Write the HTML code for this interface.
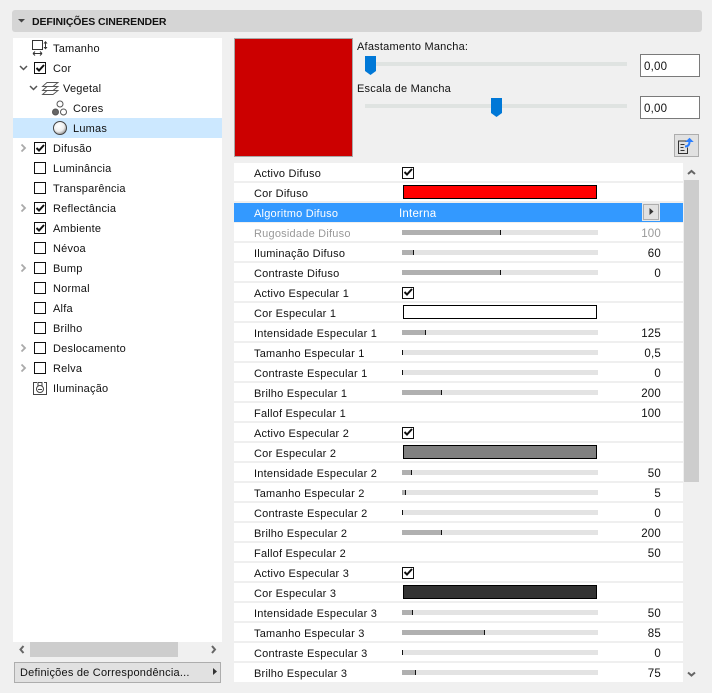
<!DOCTYPE html>
<html><head><meta charset="utf-8">
<style>
html,body{margin:0;padding:0;background:#f0f0f0}
body{width:712px;height:693px;position:relative;overflow:hidden;font-family:"Liberation Sans",sans-serif;font-size:11px;color:#111}
.a{position:absolute}
.t{position:absolute;white-space:nowrap;line-height:14px;letter-spacing:.22px;margin-top:1px}
.cb{position:absolute;width:10px;height:10px;border:1px solid #111;background:#fff}
svg{position:absolute;overflow:visible}
.r{position:absolute;left:234px;width:449px;height:18px;background:#fff;border-bottom:2px solid #efefef}
.r .l{position:absolute;left:20px;top:4px;white-space:nowrap;line-height:14px;letter-spacing:.22px}
.r .v{position:absolute;right:22px;top:4px;line-height:14px;letter-spacing:.2px;font-size:11.5px}
.r .s{position:absolute;left:168px;top:7px;width:196px;height:5px;background:#e3e3e3}
.r .s i{position:absolute;left:0;top:0;height:5px;background:#b0b0b0;border-right:1px solid #111}
.r .c{position:absolute;left:169px;top:2px;width:192px;height:12px;border:1px solid #000}
.r .b{position:absolute;left:168px;top:4px;width:10px;height:10px;border:1px solid #111;background:#fff}
.g{color:#999}
</style></head><body>

<!-- header -->
<div class="a" style="left:12px;top:10px;width:690px;height:22px;background:#d5d5d5;border-radius:3px"></div>
<svg style="left:0;top:0" width="30" height="30"><path d="M18 19h7l-3.500 3.500z" fill="#444"/></svg>
<div class="t" style="left:32px;top:14px;font-weight:bold;font-size:10.500px;letter-spacing:-.1px">DEFINIÇÕES CINERENDER</div>

<!-- tree panel -->
<div class="a" style="left:13px;top:38px;width:209px;height:604px;background:#fff"></div>
<div class="a" style="left:13px;top:118px;width:209px;height:20px;background:#cce8ff"></div>

<svg style="left:0;top:0" width="230" height="400" fill="none" stroke="#333">
<!-- tamanho icon -->
<rect x="32.500" y="40.500" width="10" height="9"/>
<path d="M43.500 43.500l2-2.500 2 2.500zM43.500 47l2 2.500 2-2.500z" fill="#333" stroke="none"/>
<path d="M45.500 42v6"/>
<path d="M33 53.500h9M33 53.500l2-2M33 53.500l2 2M42 53.500l-2-2M42 53.500l-2 2"/>
<!-- expanders -->
<path d="M20 66l3.500 3.500L27 66" stroke="#555" stroke-width="1.500"/>
<path d="M30 86l3.500 3.500L37 86" stroke="#555" stroke-width="1.500"/>
<g stroke="#aaa" stroke-width="1.800">
<path d="M21.500 144.500l3.500 3.500-3.500 3.500"/>
<path d="M21.500 204.500l3.500 3.500-3.500 3.500"/>
<path d="M21.500 264.500l3.500 3.500-3.500 3.500"/>
<path d="M21.500 344.500l3.500 3.500-3.500 3.500"/>
<path d="M21.500 364.500l3.500 3.500-3.500 3.500"/>
</g>
<!-- vegetal layers -->
<path d="M47 82.500h11l-5 4H42.500zM47 86.500h11l-5 4H42.500zM47 90.500h11l-5 4H42.500z" stroke="#555" stroke-width=".9"/>
<!-- cores -->
<circle cx="60" cy="104" r="3" stroke="#555"/>
<circle cx="55.500" cy="112" r="3" fill="#666" stroke="#555"/>
<circle cx="63.500" cy="112" r="3" stroke="#555"/>
<!-- lumas -->
<defs><radialGradient id="gr" cx=".4" cy=".35" r=".75"><stop offset="0" stop-color="#fff"/><stop offset=".55" stop-color="#eee"/><stop offset="1" stop-color="#777"/></radialGradient></defs>
<circle cx="60" cy="128" r="6.500" fill="url(#gr)" stroke="#444"/>
<!-- iluminacao -->
<path d="M37 382.500h-3.500v12h13v-12H44" stroke="#444"/>
<circle cx="40" cy="389" r="3.500" stroke="#444"/>
<path d="M38 386v-3.500h4v3.500" stroke="#444"/>
<path d="M38 389.500h4" stroke="#444"/>
</svg>

<div class="t" style="left:53px;top:41px">Tamanho</div>
<div class="cb" style="left:34px;top:62px"></div><div class="t" style="left:53px;top:61px">Cor</div>
<div class="t" style="left:63px;top:81px">Vegetal</div>
<div class="t" style="left:73px;top:101px">Cores</div>
<div class="t" style="left:73px;top:121px">Lumas</div>
<div class="cb" style="left:34px;top:142px"></div><div class="t" style="left:53px;top:141px">Difusão</div>
<div class="cb" style="left:34px;top:162px"></div><div class="t" style="left:53px;top:161px">Luminância</div>
<div class="cb" style="left:34px;top:182px"></div><div class="t" style="left:53px;top:181px">Transparência</div>
<div class="cb" style="left:34px;top:202px"></div><div class="t" style="left:53px;top:201px">Reflectância</div>
<div class="cb" style="left:34px;top:222px"></div><div class="t" style="left:53px;top:221px">Ambiente</div>
<div class="cb" style="left:34px;top:242px"></div><div class="t" style="left:53px;top:241px">Névoa</div>
<div class="cb" style="left:34px;top:262px"></div><div class="t" style="left:53px;top:261px">Bump</div>
<div class="cb" style="left:34px;top:282px"></div><div class="t" style="left:53px;top:281px">Normal</div>
<div class="cb" style="left:34px;top:302px"></div><div class="t" style="left:53px;top:301px">Alfa</div>
<div class="cb" style="left:34px;top:322px"></div><div class="t" style="left:53px;top:321px">Brilho</div>
<div class="cb" style="left:34px;top:342px"></div><div class="t" style="left:53px;top:341px">Deslocamento</div>
<div class="cb" style="left:34px;top:362px"></div><div class="t" style="left:53px;top:361px">Relva</div>
<div class="t" style="left:53px;top:381px">Iluminação</div>
<svg style="left:0;top:0;z-index:3" width="60" height="240" fill="none" stroke="#111" stroke-width="2">
<path d="M36.500 68l2.500 2.500L44 65"/><path d="M36.500 148l2.500 2.500L44 145"/><path d="M36.500 208l2.500 2.500L44 205"/><path d="M36.500 228l2.500 2.500L44 225"/>
</svg>

<!-- tree h scrollbar -->
<div class="a" style="left:30px;top:642px;width:148px;height:15px;background:#cdcdcd"></div>
<svg style="left:0;top:0" width="230" height="693" fill="none" stroke="#666" stroke-width="2"><path d="M23.500 646l-3 3.500 3 3.500M212 646l3 3.500-3 3.500"/></svg>

<!-- button -->
<div class="a" style="left:14px;top:662px;width:205px;height:19px;background:#e1e1e1;border:1px solid #adadad"></div>
<div class="t" style="left:20px;top:665px">Definições de Correspondência...</div>
<svg style="left:0;top:0" width="230" height="693"><path d="M213 668v7l4-3.500z" fill="#333"/></svg>

<!-- swatch -->
<div class="a" style="left:234px;top:38px;width:117px;height:117px;background:#cc0000;border:1px solid #a8a8a8"></div>

<!-- sliders -->
<div class="t" style="left:357px;top:39px">Afastamento Mancha:</div>
<div class="a" style="left:365px;top:62px;width:262px;height:4px;background:#dfe3e1"></div>
<div class="t" style="left:357px;top:81px">Escala de Mancha</div>
<div class="a" style="left:365px;top:104px;width:262px;height:4px;background:#dfe3e1"></div>
<svg style="left:0;top:0" width="712" height="130"><path d="M365 56h11v15l-5.500 4-5.500-4z" fill="#0078d7"/><path d="M491 98h11v15l-5.500 4-5.500-4z" fill="#0078d7"/></svg>
<div class="a" style="left:640px;top:54px;width:58px;height:21px;background:#fff;border:1px solid #7a7a7a"></div>
<div class="t" style="left:644px;top:59px;font-size:11.500px">0,00</div>
<div class="a" style="left:640px;top:96px;width:58px;height:21px;background:#fff;border:1px solid #7a7a7a"></div>
<div class="t" style="left:644px;top:101px;font-size:11.500px">0,00</div>
<div class="a" style="left:674px;top:134px;width:23px;height:21px;background:#e1e1e1;border:1px solid #adadad"></div>
<svg style="left:0;top:0" width="712" height="170" fill="none"><path d="M688 141h-9.500v12.500h9v-6" stroke="#333"/><path d="M680.500 144.500h4M680.500 147.500h3M680.500 150.500h4" stroke="#333"/><path d="M685 146.500c3 0 4.500-1.500 4.500-5" stroke="#2b7fff" stroke-width="2"/><path d="M686.500 141.500l3-3 3 3z" fill="#2b7fff" stroke="#2b7fff"/></svg>

<!-- property list -->
<div class="r" style="top:163px"><span class="l">Activo Difuso</span><span class="b"></span></div>
<div class="r" style="top:183px"><span class="l">Cor Difuso</span><span class="c" style="background:#f00"></span></div>
<div class="r" style="top:203px;height:19px;background:#3399ff;border-bottom:1px solid #efefef;color:#fff"><span class="l">Algoritmo Difuso</span><span class="l" style="left:165px;font-size:11.500px">Interna</span>
<span style="position:absolute;left:409px;top:1px;width:14px;height:14px;background:#e1e1e1;border:1px solid #adadad;outline:1px solid #e8e8e8"></span>
<svg style="left:0;top:0" width="449" height="19"><path d="M415.500 5v7l4-3.500z" fill="#333"/></svg></div>
<div class="r g" style="top:223px"><span class="l">Rugosidade Difuso</span><span class="s"><i style="width:98px"></i></span><span class="v">100</span></div>
<div class="r" style="top:243px"><span class="l">Iluminação Difuso</span><span class="s"><i style="width:11px"></i></span><span class="v">60</span></div>
<div class="r" style="top:263px"><span class="l">Contraste Difuso</span><span class="s"><i style="width:98px"></i></span><span class="v">0</span></div>
<div class="r" style="top:283px"><span class="l">Activo Especular 1</span><span class="b"></span></div>
<div class="r" style="top:303px"><span class="l">Cor Especular 1</span><span class="c" style="background:#fff"></span></div>
<div class="r" style="top:323px"><span class="l">Intensidade Especular 1</span><span class="s"><i style="width:23px"></i></span><span class="v">125</span></div>
<div class="r" style="top:343px"><span class="l">Tamanho Especular 1</span><span class="s"><i style="width:0"></i></span><span class="v">0,5</span></div>
<div class="r" style="top:363px"><span class="l">Contraste Especular 1</span><span class="s"><i style="width:0"></i></span><span class="v">0</span></div>
<div class="r" style="top:383px"><span class="l">Brilho Especular 1</span><span class="s"><i style="width:39px"></i></span><span class="v">200</span></div>
<div class="r" style="top:403px"><span class="l">Fallof Especular 1</span><span class="v">100</span></div>
<div class="r" style="top:423px"><span class="l">Activo Especular 2</span><span class="b"></span></div>
<div class="r" style="top:443px"><span class="l">Cor Especular 2</span><span class="c" style="background:#808080"></span></div>
<div class="r" style="top:463px"><span class="l">Intensidade Especular 2</span><span class="s"><i style="width:9px"></i></span><span class="v">50</span></div>
<div class="r" style="top:483px"><span class="l">Tamanho Especular 2</span><span class="s"><i style="width:3px"></i></span><span class="v">5</span></div>
<div class="r" style="top:503px"><span class="l">Contraste Especular 2</span><span class="s"><i style="width:0"></i></span><span class="v">0</span></div>
<div class="r" style="top:523px"><span class="l">Brilho Especular 2</span><span class="s"><i style="width:39px"></i></span><span class="v">200</span></div>
<div class="r" style="top:543px"><span class="l">Fallof Especular 2</span><span class="v">50</span></div>
<div class="r" style="top:563px"><span class="l">Activo Especular 3</span><span class="b"></span></div>
<div class="r" style="top:583px"><span class="l">Cor Especular 3</span><span class="c" style="background:#333"></span></div>
<div class="r" style="top:603px"><span class="l">Intensidade Especular 3</span><span class="s"><i style="width:10px"></i></span><span class="v">50</span></div>
<div class="r" style="top:623px"><span class="l">Tamanho Especular 3</span><span class="s"><i style="width:82px"></i></span><span class="v">85</span></div>
<div class="r" style="top:643px"><span class="l">Contraste Especular 3</span><span class="s"><i style="width:0"></i></span><span class="v">0</span></div>
<div class="r" style="top:663px;height:19px;border:0"><span class="l">Brilho Especular 3</span><span class="s"><i style="width:13px"></i></span><span class="v">75</span></div>

<svg style="left:0;top:0;z-index:3" width="712" height="600" fill="none" stroke="#111" stroke-width="2">
<path d="M404.500 172l2.500 2.500 5-5.500M404.500 292l2.500 2.500 5-5.500M404.500 432l2.500 2.500 5-5.500M404.500 572l2.500 2.500 5-5.500"/>
</svg>

<!-- right scrollbar -->
<div class="a" style="left:684px;top:180px;width:15px;height:302px;background:#cdcdcd"></div>
<svg style="left:0;top:0" width="712" height="693" fill="none" stroke="#666" stroke-width="2"><path d="M688 174l3.500-3 3.500 3M688 672.500l3.500 3 3.500-3"/></svg>

</body></html>
